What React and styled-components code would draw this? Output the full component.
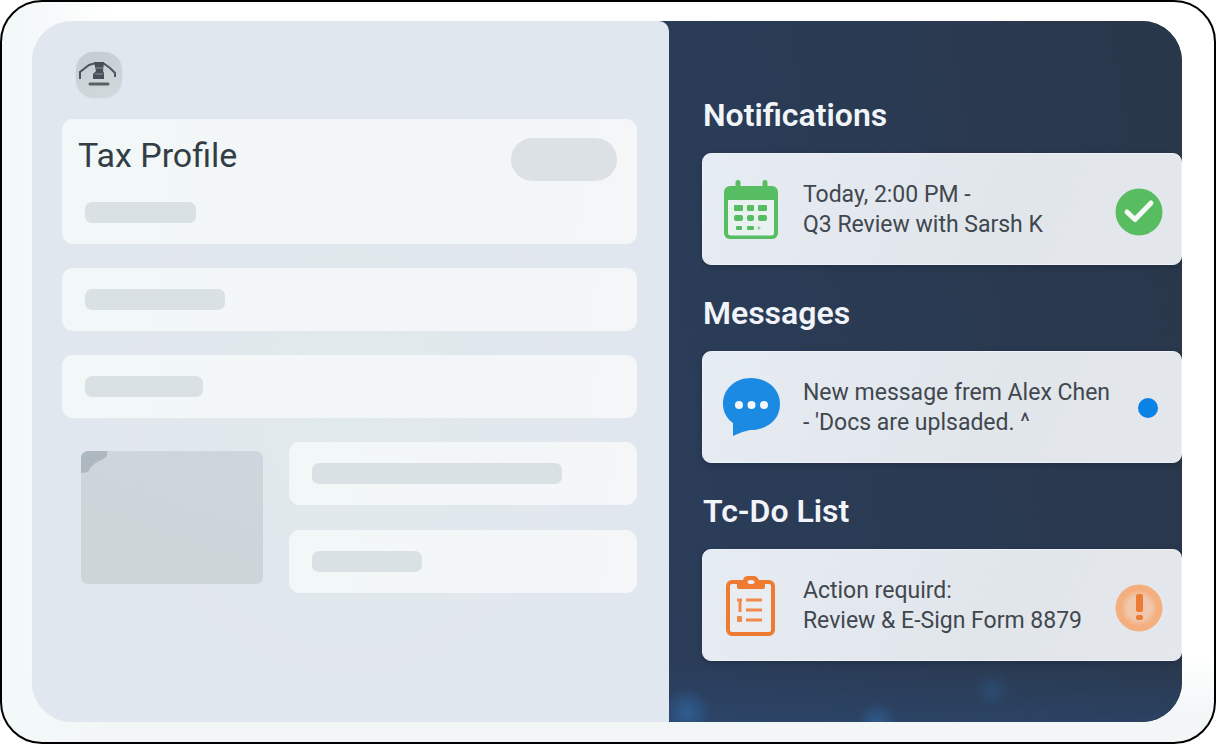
import React from "react";
import styled, { createGlobalStyle } from "styled-components";

const GlobalStyle = createGlobalStyle`
  *, *::before, *::after { box-sizing: border-box; }
  body { margin: 0; background: #ffffff; font-family: Roboto, "Liberation Sans", sans-serif; }
  h1, h2, p { margin: 0; }
`;

const Frame = styled.div`
  display: flex;
  min-height: 100vh;
  padding: 19px 32px 20px 30px;
  border: 2px solid #000000;
  border-radius: 42px;
  background:
    linear-gradient(to right, #f3f8f8 20px, rgba(243, 248, 248, 0) 110px),
    linear-gradient(to top, #f2f6f7 24px, rgba(242, 246, 247, 0) 90px),
    #ffffff;
`;

const Screen = styled.main`
  flex: 1;
  display: grid;
  grid-template-columns: 36fr 29fr;
  border-radius: 40px;
  overflow: hidden;
  background: linear-gradient(to right, #e1e7ee 50%, #2b3b56 50%);
`;

const Profile = styled.section`
  display: flex;
  flex-direction: column;
  gap: 24px;
  padding: 31px 32px 32px 30px;
  border-top-right-radius: 10px;
  background:
    radial-gradient(ellipse at 50% 55%, rgba(225, 234, 236, 0.9), rgba(225, 234, 236, 0) 60%),
    #e1e7ee;
`;

const Logo = styled.div`
  width: 46px;
  height: 46px;
  margin: 0 14px -3px;
  border-radius: 18px;
  background: linear-gradient(160deg, #c3ccd2, #d3dadd);
  box-shadow: 0 0 2px #d3dadd;
  svg { display: block; }
`;

const Panel = styled.div`
  display: flex;
  align-items: center;
  min-height: 63px;
  padding: 0 23px;
  border-radius: 11px;
  background: linear-gradient(100deg, #f2f7f8, #f4f6f8);
`;

const TitlePanel = styled(Panel)`
  flex-direction: column;
  align-items: stretch;
  gap: 21px;
  min-height: 125px;
  padding: 19px 20px 21px 16px;
`;

const TitleRow = styled.div`
  display: flex;
  justify-content: space-between;
`;

const Title = styled.h1`
  font-size: 34px;
  line-height: 34px;
  font-weight: 400;
  color: #333d45;
`;

const Pill = styled.div`
  width: 106px;
  height: 43px;
  border-radius: 22px;
  background: #dce1e6;
`;

const Bar = styled.div`
  width: ${(p) => p.$width};
  height: 21px;
  margin-left: ${(p) => (p.$indent ? "7px" : "0")};
  border-radius: 7px;
  background: #dae1e4;
`;

const Split = styled.div`
  display: grid;
  grid-template-columns: 182px 1fr;
  gap: 26px;
  padding-left: 19px;
`;

const Thumbnail = styled.div`
  height: 133px;
  margin-top: 9px;
  border-radius: 7px;
  overflow: hidden;
  background: linear-gradient(20deg, #ced5d8, #ced5dc);
  svg { display: block; }
`;

const Stack = styled.div`
  display: flex;
  flex-direction: column;
  gap: 25px;
`;

const Feed = styled.aside`
  display: flex;
  flex-direction: column;
  gap: 28px;
  padding: 74px 0 32px 33px;
  background:
    radial-gradient(circle at 18px calc(100% - 10px), rgba(48, 105, 164, 0.7), rgba(48, 105, 164, 0) 24px),
    radial-gradient(circle at 208px 100%, rgba(48, 105, 164, 0.6), rgba(48, 105, 164, 0) 20px),
    radial-gradient(circle at 323px calc(100% - 32px), rgba(48, 95, 145, 0.4), rgba(48, 95, 145, 0) 18px),
    linear-gradient(to top, rgba(44, 76, 118, 0.5), rgba(44, 76, 118, 0) 60px),
    linear-gradient(80deg, #2b3d5a, #2a3a52 50%, #29374a);
`;

const Group = styled.section`
  display: flex;
  flex-direction: column;
  gap: 18px;
`;

const Heading = styled.h2`
  padding-left: 1px;
  font-size: 32px;
  line-height: 40px;
  font-weight: 600;
  color: #f1f4f8;
`;

const Card = styled.article`
  display: flex;
  align-items: center;
  min-height: 112px;
  padding: 2px 18px 0 20px;
  border: 1px solid #eef2f6;
  border-radius: 9px;
  background: linear-gradient(115deg, #e6ecf3, #e1e6eb 60%, #e4e7ec);
  box-shadow: 0 2px 5px rgba(20, 30, 48, 0.35);
`;

const CardText = styled.p`
  flex: 1;
  margin-left: 24px;
  font-size: 23px;
  line-height: 30px;
  white-space: nowrap;
  color: #41474e;
`;

const StatusBadge = styled.svg`
  width: 48px;
  height: 48px;
  margin-top: 4px;
`;

const Dot = styled.span`
  width: 20px;
  height: 20px;
  margin-right: 5px;
  border-radius: 50%;
  background: #0b82e6;
`;

const LogoMark = () => (
  <svg width="46" height="46" viewBox="0 0 46 46" fill="none" aria-hidden="true">
    <path d="M4 27V20L13 13L20 11H27L34 16L39 21V25" stroke="#4c565d" strokeWidth="2" />
    <path d="M18 10H28L27 19L28 21V27H17V22L20 19Z" fill="#465058" />
    <path d="M20 16H27M19 22H27" stroke="#87929a" strokeWidth="1" />
    <path d="M14 32H32" stroke="#566067" strokeWidth="3" strokeLinecap="round" />
  </svg>
);

const CalendarIcon = () => (
  <svg width="56" height="60" viewBox="0 0 56 60" aria-hidden="true">
    <rect x="1" y="6" width="54" height="53" rx="6" fill="#56bd62" />
    <path d="M12.500 2.500a2.500 2.500 0 0 1 5 0V8H12.500ZM39.500 2.500a2.500 2.500 0 0 1 5 0V8H39.500Z" fill="#56bd62" />
    <path d="M5 20H51V53Q51 55.500 48 55.500H8Q5 55.500 5 53Z" fill="#e9f2f1" />
    <g fill="#56bd62">
      <rect x="11" y="25" width="9" height="6" rx="1" />
      <rect x="24" y="25" width="7" height="6" rx="1" />
      <rect x="35" y="25" width="9" height="6" rx="1" />
      <rect x="11" y="35" width="9" height="6" rx="2" />
      <rect x="24" y="35" width="7" height="6" rx="2" />
      <rect x="35" y="35" width="9" height="6" rx="2" />
      <rect x="13" y="46" width="6" height="4" rx="1" />
      <rect x="24" y="46" width="7" height="4" rx="1" />
      <circle cx="36" cy="48" r="1.500" opacity="0.6" />
    </g>
  </svg>
);

const ChatIcon = () => (
  <svg width="56" height="60" viewBox="0 0 56 60" aria-hidden="true" overflow="visible">
    <path
      d="M28 0C44 0 57 11 57 26C57 42 44 52 27 52C22 53 16 55 10 58V45C4 41 0 34 0 26C0 11 12 0 28 0Z"
      fill="#1b8ae2"
    />
    <g fill="#f4f8fc">
      <circle cx="16" cy="27" r="4" />
      <circle cx="28.500" cy="27" r="4" />
      <circle cx="41" cy="27" r="4" />
    </g>
  </svg>
);

const ClipboardIcon = () => (
  <svg width="56" height="62" viewBox="0 0 56 62" fill="none" aria-hidden="true">
    <rect x="5" y="7" width="45" height="52" rx="4" fill="#e9edf1" stroke="#ef7b32" strokeWidth="4" />
    <path
      d="M14 5H20Q21 1 25 1H31Q34 1 36 5H42V12Q42 14 40 14H16Q14 14 14 12Z"
      fill="#ef7b32"
    />
    <ellipse cx="28" cy="7" rx="3.500" ry="2" fill="#e9edf1" />
    <path d="M14 25H19M17 25V37M14 44H19M23 25H39M23 35H39M23 45H39" stroke="#ef8a4c" strokeWidth="3" />
    <rect x="14" y="41" width="5" height="6" rx="1" fill="#ef8a4c" />
  </svg>
);

const CheckIcon = () => (
  <StatusBadge viewBox="0 0 48 48" fill="none" role="img" aria-label="Confirmed">
    <circle cx="24" cy="24" r="23.500" fill="#58bc60" />
    <path d="M12 24L20 31.500L36 15" stroke="#f6faf6" strokeWidth="5" strokeLinecap="round" strokeLinejoin="round" />
  </StatusBadge>
);

const AlertIcon = () => (
  <StatusBadge viewBox="0 0 48 48" role="img" aria-label="Attention">
    <defs>
      <radialGradient id="alertFill">
        <stop offset="0.5" stopColor="#efc8ad" />
        <stop offset="0.78" stopColor="#f5ae7d" />
      </radialGradient>
    </defs>
    <circle cx="24" cy="24" r="23.500" fill="url(#alertFill)" />
    <rect x="21" y="10" width="7" height="18" rx="2" fill="#ec7b35" />
    <rect x="21" y="31" width="7" height="5" rx="2" fill="#ec7b35" />
  </StatusBadge>
);

const groups = [
  {
    title: "Notifications",
    lines: ["Today, 2:00 PM -", "Q3 Review with Sarsh K"],
    icon: <CalendarIcon />,
    status: <CheckIcon />,
  },
  {
    title: "Messages",
    lines: ["New message frem Alex Chen", "- 'Docs are uplsaded. ^"],
    icon: <ChatIcon />,
    status: <Dot role="img" aria-label="Unread" />,
  },
  {
    title: "Tc-Do List",
    lines: ["Action requird:", "Review & E-Sign Form 8879"],
    icon: <ClipboardIcon />,
    status: <AlertIcon />,
  },
];

export default function App() {
  return (
    <>
      <GlobalStyle />
      <Frame>
        <Screen>
          <Profile>
            <Logo>
              <LogoMark />
            </Logo>
            <TitlePanel>
              <TitleRow>
                <Title>Tax Profile</Title>
                <Pill />
              </TitleRow>
              <Bar $width="111px" $indent />
            </TitlePanel>
            <Panel>
              <Bar $width="140px" />
            </Panel>
            <Panel>
              <Bar $width="118px" />
            </Panel>
            <Split>
              <Thumbnail>
                <svg width="28" height="24" viewBox="0 0 28 24" aria-hidden="true">
                  <path d="M0 0H26V5Q22 9 18 10Q9 15 7 21L0 22Z" fill="#adb8c1" />
                </svg>
              </Thumbnail>
              <Stack>
                <Panel>
                  <Bar $width="250px" />
                </Panel>
                <Panel>
                  <Bar $width="110px" />
                </Panel>
              </Stack>
            </Split>
          </Profile>
          <Feed>
            {groups.map((g) => (
              <Group key={g.title}>
                <Heading>{g.title}</Heading>
                <Card>
                  {g.icon}
                  <CardText>
                    {g.lines[0]}
                    <br />
                    {g.lines[1]}
                  </CardText>
                  {g.status}
                </Card>
              </Group>
            ))}
          </Feed>
        </Screen>
      </Frame>
    </>
  );
}
